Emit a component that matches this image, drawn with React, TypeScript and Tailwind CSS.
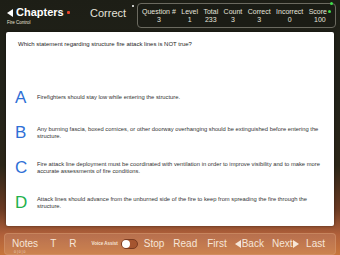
export default function App() {
  const stats = [
    { label: 'Question #', value: '3' },
    { label: 'Level', value: '1' },
    { label: 'Total', value: '233' },
    { label: 'Count', value: '3' },
    { label: 'Correct', value: '3' },
    { label: 'Incorrect', value: '0' },
    { label: 'Score', value: '100' },
  ];

  const answers = [
    { letter: 'A', color: 'text-[#2f6fd6]', text: 'Firefighters should stay low while entering the structure.' },
    {
      letter: 'B',
      color: 'text-[#2f6fd6]',
      text: 'Any burning fascia, boxed cornices, or other doorway overhanging should be extinguished before entering the structure.',
    },
    {
      letter: 'C',
      color: 'text-[#2f6fd6]',
      text: 'Fire attack line deployment must be coordinated with ventilation in order to improve visibility and to make more accurate assessments of fire conditions.',
    },
    {
      letter: 'D',
      color: 'text-[#22b14c]',
      text: 'Attack lines should advance from the unburned side of the fire to keep from spreading the fire through the structure.',
    },
  ];

  return (
    <div
      className="relative w-[340px] h-[255px] overflow-hidden flex flex-col bg-[linear-gradient(180deg,#1d1e16_0%,#23231a_40%,#2c2618_65%,#6a3a22_82%,#b0603a_92%,#c8763c_100%)]"
      style={{ fontFamily: '"Liberation Sans", Arial, sans-serif' }}
    >
      {/* top bar */}
      <div className="flex items-start h-[31px] pl-[7px] pr-[4px] pt-[3px]">
        <div className="flex flex-col w-[80px]">
          <div className="flex items-center gap-[3px] mt-[4px]">
            <svg width="6" height="8" viewBox="0 0 6 8">
              <polygon points="6,0 6,8 0,4" fill="#fff" />
            </svg>
            <span className="text-white font-bold text-[11px] leading-[11px]">Chapters</span>
            <span className="w-[3px] h-[3px] bg-[#e8452a] rounded-[1px]" />
          </div>
          <span className="text-[#e8e4d8] text-[4.5px] leading-[6px] mt-[2px]">Fire Control</span>
        </div>
        <span className="text-[#e4e2da] text-[11px] leading-[11px] mt-[5px] ml-[3px]">Correct</span>
        <span className="absolute left-[132px] top-[5px] w-[2px] h-[2px] bg-white rounded-full" />
        <span className="absolute left-[330px] top-[2px] w-[3px] h-[3px] bg-[#3ee04a] rounded-full" />
        <div className="ml-auto w-[199px] h-[25px] border border-[#6b6a60] rounded-[4px] bg-[#1a1b15]/70 flex justify-between items-center px-[4px] text-[#e6e4dc] text-[7px] leading-[8px]">
          {stats.map((s) => (
            <div key={s.label} className="flex flex-col items-center">
              <div className="flex items-center gap-[1px]">
                <span>{s.label}</span>
                {s.label === 'Score' && <span className="w-[3px] h-[3px] bg-[#3ee04a] rounded-full" />}
              </div>
              <span>{s.value}</span>
            </div>
          ))}
        </div>
      </div>

      {/* question card */}
      <div className="mx-[6px] mt-[1px] h-[194px] bg-white rounded-[2px] shadow-[0_0_3px_rgba(0,0,0,0.5)] pl-[9px] pr-[3px] pt-[8px]">
        <p className="text-[#1c1c1c] text-[6px] leading-[8px] pl-[3px]">Which statement regarding structure fire attack lines is NOT true?</p>
        <div className="flex flex-col mt-[42px] gap-[20px]">
          {answers.map((a) => (
            <div key={a.letter} className="flex items-center h-[15px]">
              <span className={`w-[22px] shrink-0 text-[17px] leading-[17px] ${a.color}`}>{a.letter}</span>
              <p className="text-[#333] text-[5.8px] leading-[7px]">{a.text}</p>
            </div>
          ))}
        </div>
      </div>

      {/* bottom bar */}
      <div className="mx-[4px] mt-[7px] h-[22px] rounded-[4px] border border-[#d4956a]/60 bg-white/10 flex items-center pl-[7px] pr-[10px] text-[#f6e6d8] text-[10px] leading-[10px]">
        <div className="relative flex flex-col">
          <span>Notes</span>
          <span className="absolute top-[11px] left-[2px] text-[3.5px] leading-[4px] text-[#e8d0c0] whitespace-nowrap">0 | 0 | 0</span>
        </div>
        <span className="ml-[12px]">T</span>
        <span className="ml-[13px]">R</span>
        <span className="ml-[15px] text-[4.5px] font-bold">Voice Assist</span>
        <div className="ml-[3px] w-[17px] h-[10px] rounded-full border border-[#7a3c22] bg-[#a5552f] relative">
          <span className="absolute left-[0px] top-[0px] w-[8px] h-[8px] rounded-full bg-white" />
        </div>
        <span className="ml-[6px]">Stop</span>
        <span className="ml-[9px]">Read</span>
        <span className="ml-[10px]">First</span>
        <span className="ml-[8px] flex items-center gap-[1px]">
          <svg width="6" height="8" viewBox="0 0 6 8">
            <polygon points="6,0 6,8 0,4" fill="#f6e6d8" />
          </svg>
          Back
        </span>
        <span className="ml-[8px] flex items-center gap-[1px]">
          Next
          <svg width="6" height="8" viewBox="0 0 6 8">
            <polygon points="0,0 0,8 6,4" fill="#f6e6d8" />
          </svg>
        </span>
        <span className="ml-auto">Last</span>
      </div>
    </div>
  );
}
